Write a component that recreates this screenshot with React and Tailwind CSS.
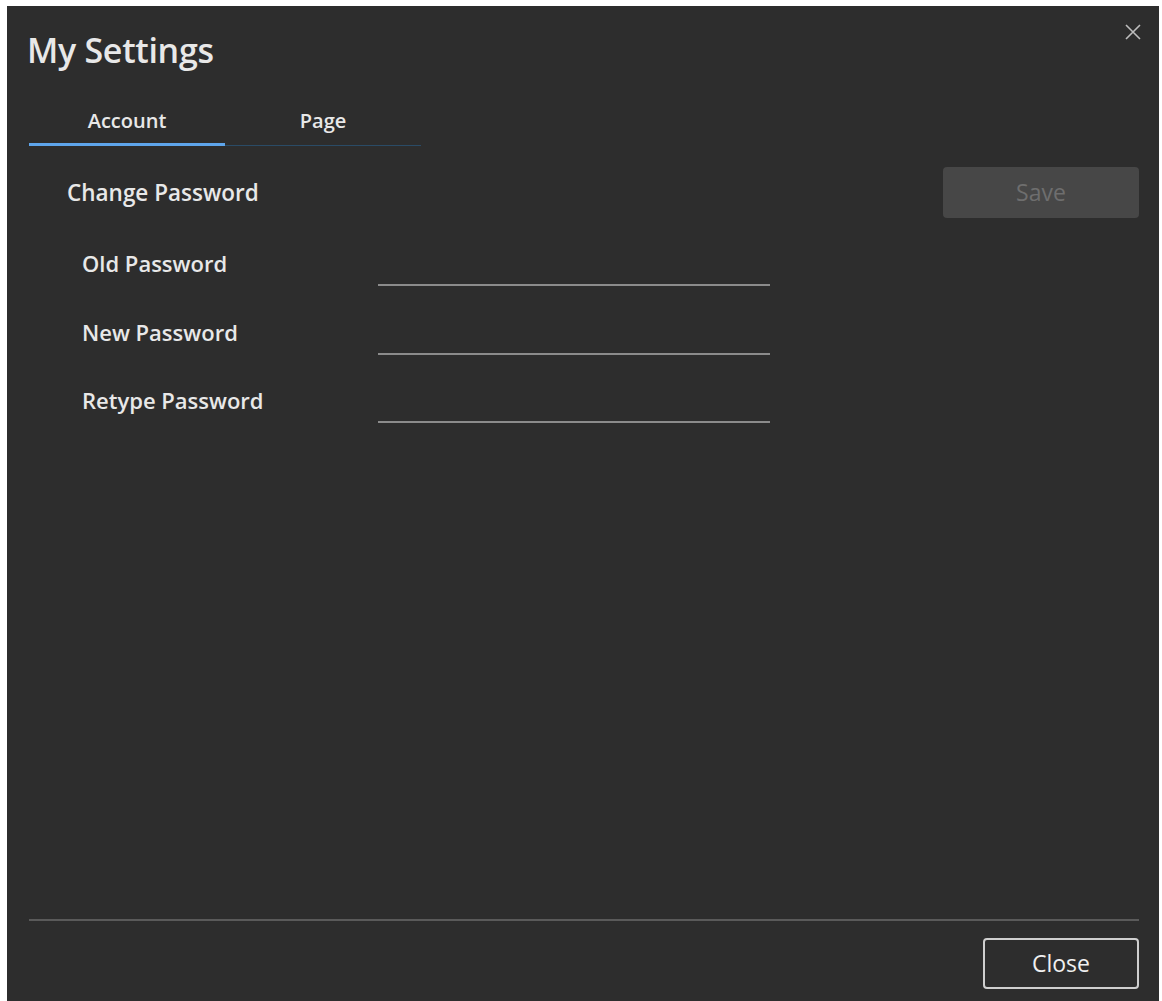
import React, { useState } from "react";

const fields = ["Old Password", "New Password", "Retype Password"];

const App = () => {
  const [tab, setTab] = useState("Account");

  return (
    <div className="min-h-screen bg-white pt-[6px] pl-[7px] pr-[3px]" style={{ fontFamily: '"Open Sans", "Noto Sans", sans-serif' }}>
      <div className="relative flex h-[995px] flex-col bg-[#2d2d2d] pl-[22px] pr-[20px] text-[#e8e8e8]">
        {/* close glyph */}
        <button className="absolute right-[17px] top-[17px] text-[#bdbdbd]">
          <svg width="18" height="18" viewBox="0 0 18 18" stroke="currentColor" strokeWidth="1.6" fill="none">
            <path d="M2 2L16 16M16 2L2 16" />
          </svg>
        </button>

        <h1 className="-ml-[2px] mt-[22px] text-[34px] font-semibold leading-[44px] tracking-[-0.3px]">My Settings</h1>

        {/* tabs */}
        <div className="mt-[35px] flex w-[392px] border-b border-[#2a4b66]">
          {["Account", "Page"].map((t) => (
            <button
              key={t}
              onClick={() => setTab(t)}
              className={`-mb-px w-[196px] pb-[8px] text-[20px] font-semibold leading-[28px] ${
                tab === t ? "border-b-[3px] border-[#5ea5ec]" : "border-b-[3px] border-transparent"
              }`}>
              {t}
            </button>
          ))}
        </div>

        <div className="flex justify-between">
          <div className="pl-[38px] pt-[32px]">
            <div className="text-[22.5px] font-semibold leading-[30px]">Change Password</div>
            <div className="mt-[42px] flex flex-col gap-[32.5px]">
              {fields.map((f) => (
                <div key={f} className="flex items-start">
                  <span className="w-[311px] pl-[15px] text-[22px] font-semibold leading-[26px]">{f}</span>
                  <input
                    type="password"
                    className="mt-[12px] h-[24px] w-[392px] border-b-2 border-[#8b8b8b] bg-transparent outline-none"
                  />
                </div>
              ))}
            </div>
          </div>
          <button
            disabled
            className="mt-[21px] h-[51px] w-[196px] rounded-[4px] bg-[#474747] text-[23px] text-[#6e6e6e]">
            Save
          </button>
        </div>

        <div className="flex-1" />

        <div className="flex justify-end border-t-2 border-[#5a5a5a] pb-[12px] pt-[17px]">
          <button className="h-[51px] w-[156px] rounded-[4px] border-2 border-[#cfcfcf] text-[23px] text-[#f0f0f0]">
            Close
          </button>
        </div>
      </div>
    </div>
  );
};

export default App;
